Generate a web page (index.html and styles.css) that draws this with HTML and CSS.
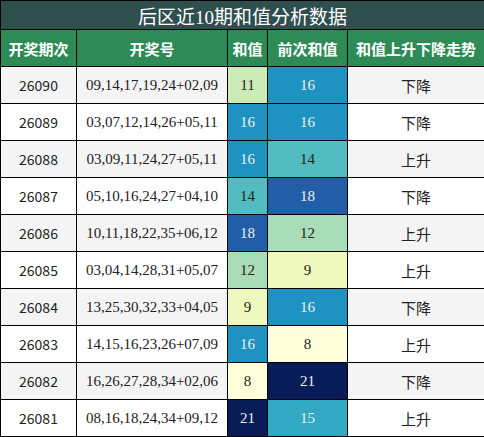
FILE: index.html
```html
<!DOCTYPE html>
<html>
  <head>
    <title>后区近10期和值分析数据</title>
    <link rel="stylesheet" href="styles.css">
  </head>
  <body>
  <table class="sum-table">
    <colgroup>
      <col class="col-period">
      <col class="col-numbers">
      <col class="col-sum">
      <col class="col-prev">
      <col class="col-trend">
    </colgroup>
    <tr class="title-row">
      <td colspan="5">后区近10期和值分析数据</td>
    </tr>
    <tr class="head-row">
      <th>开奖期次</th>
      <th>开奖号</th>
      <th>和值</th>
      <th>前次和值</th>
      <th>和值上升下降走势</th>
    </tr>
    <tr class="odd">
      <td class="period">26090</td>
      <td class="numbers">09,14,17,19,24+02,09</td>
      <td class="val v11">11</td>
      <td class="val v16">16</td>
      <td class="trend">下降</td>
    </tr>
    <tr>
      <td class="period">26089</td>
      <td class="numbers">03,07,12,14,26+05,11</td>
      <td class="val v16">16</td>
      <td class="val v16">16</td>
      <td class="trend">下降</td>
    </tr>
    <tr class="odd">
      <td class="period">26088</td>
      <td class="numbers">03,09,11,24,27+05,11</td>
      <td class="val v16">16</td>
      <td class="val v14">14</td>
      <td class="trend">上升</td>
    </tr>
    <tr>
      <td class="period">26087</td>
      <td class="numbers">05,10,16,24,27+04,10</td>
      <td class="val v14">14</td>
      <td class="val v18">18</td>
      <td class="trend">下降</td>
    </tr>
    <tr class="odd">
      <td class="period">26086</td>
      <td class="numbers">10,11,18,22,35+06,12</td>
      <td class="val v18">18</td>
      <td class="val v12">12</td>
      <td class="trend">上升</td>
    </tr>
    <tr>
      <td class="period">26085</td>
      <td class="numbers">03,04,14,28,31+05,07</td>
      <td class="val v12">12</td>
      <td class="val v9">9</td>
      <td class="trend">上升</td>
    </tr>
    <tr class="odd">
      <td class="period">26084</td>
      <td class="numbers">13,25,30,32,33+04,05</td>
      <td class="val v9">9</td>
      <td class="val v16">16</td>
      <td class="trend">下降</td>
    </tr>
    <tr>
      <td class="period">26083</td>
      <td class="numbers">14,15,16,23,26+07,09</td>
      <td class="val v16">16</td>
      <td class="val v8">8</td>
      <td class="trend">上升</td>
    </tr>
    <tr class="odd">
      <td class="period">26082</td>
      <td class="numbers">16,26,27,28,34+02,06</td>
      <td class="val v8">8</td>
      <td class="val v21">21</td>
      <td class="trend">下降</td>
    </tr>
    <tr>
      <td class="period">26081</td>
      <td class="numbers">08,16,18,24,34+09,12</td>
      <td class="val v21">21</td>
      <td class="val v15">15</td>
      <td class="trend">上升</td>
    </tr>
  </table>
</body>
</html>
```

FILE: styles.css
```css
body {
  margin: 0;
  background-color: #fff;
}

.sum-table {
  width: 484px;
  table-layout: fixed;
  border-collapse: collapse;
  border: 1px solid #000;
}

.col-period { width: 76px; }
.col-numbers { width: 151px; }
.col-sum { width: 40px; }
.col-prev { width: 80px; }
.col-trend { width: 137px; }

.sum-table td,
.sum-table th {
  border: 1px solid #000;
  padding: 0;
  text-align: center;
  height: 36px;
  color: #222;
}

.title-row td {
  height: 28px;
  background-color: #2f4f4f;
  color: #fff;
  font-family: "Liberation Serif", "Noto Sans CJK SC", serif;
  font-size: 19px;
}

.head-row th {
  background-color: #2e8b57;
  color: #fff;
  font-family: "Noto Sans CJK SC", sans-serif;
  font-size: 15px;
  font-weight: bold;
}

.sum-table tr.odd td {
  background-color: #f4f4f4;
}

.period {
  font-family: "Noto Sans CJK SC", sans-serif;
  font-size: 14px;
}

.numbers,
.val {
  font-family: "Liberation Serif", serif;
  font-size: 15px;
}

.trend {
  font-family: "Noto Sans CJK SC", sans-serif;
  font-size: 15px;
}

/* value colour scale */
.sum-table tr td.v8 { background-color: #ffffd9; }
.sum-table tr td.v9 { background-color: #f0f9bd; }
.sum-table tr td.v11 { background-color: #cdebb5; }
.sum-table tr td.v12 { background-color: #a9ddb7; }
.sum-table tr td.v14 { background-color: #52bcc0; }
.sum-table tr td.v15 { background-color: #34a9c3; color: #eee; }
.sum-table tr td.v16 { background-color: #1e92c0; color: #eee; }
.sum-table tr td.v18 { background-color: #225ea8; color: #eee; }
.sum-table tr td.v21 { background-color: #081d58; color: #eee; }
```
